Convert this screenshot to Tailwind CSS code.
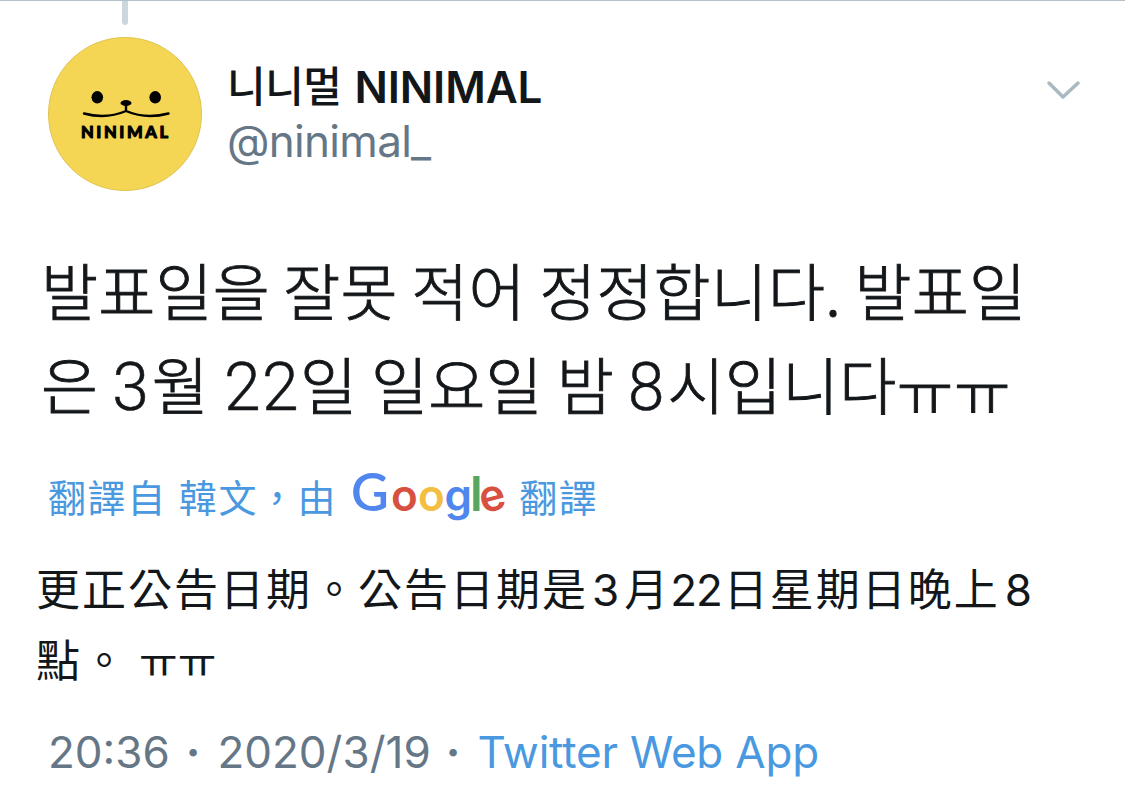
<!DOCTYPE html>
<html lang="zh-Hant">
  <head>
    <meta charset="UTF-8" />
    <meta name="viewport" content="width=device-width, initial-scale=1.0" />
    <title>니니멀 NINIMAL</title>
    <script src="https://cdn.jsdelivr.net/npm/@tailwindcss/browser@4"></script>
  </head>
  <body class="bg-white overflow-hidden font-['Inter','Noto_Sans_CJK_TC',sans-serif] text-[#14171a]">
    <article class="w-[1125px] h-[802px] border-t border-[#b4c0ca] whitespace-nowrap">
      <!-- thread line -->
      <div class="ml-[122px] w-1.5 h-6 rounded-b-full bg-[#ccd6dd]"></div>

      <header class="flex items-start h-[222px] pl-12 pt-3">
        <svg class="w-[154px] h-[154px] shrink-0" viewBox="0 0 154 154">
          <circle cx="77" cy="77" r="76.5" fill="#f4d654" stroke="#dfc450" />
          <ellipse cx="49.3" cy="60.3" rx="5.8" ry="6.2" />
          <ellipse cx="107.2" cy="60.3" rx="5.8" ry="6.2" />
          <ellipse cx="78" cy="66" rx="5.5" ry="3" />
          <path d="M78 67V74M36 76.5Q58 82.5 78 74Q98 82.5 120.5 76.5" fill="none" stroke="#000" stroke-width="2.4" stroke-linecap="round" stroke-linejoin="round" />
          <text x="33" y="100.5" font-family="Lato" font-weight="900" font-size="16.5" textLength="87" stroke="#000" stroke-width="1" stroke-linejoin="round">NINIMAL</text>
        </svg>
        <div class="ml-[25px] pt-5">
          <div class="flex items-baseline h-[54px] leading-[60px] font-semibold">
            <span class="font-['Noto_Sans_CJK_KR'] font-medium text-[42px] leading-[56px] tracking-[-0.5px] -translate-y-px">니니멀</span>
            <span class="ml-[13px] text-[44px] tracking-[-0.1px]">NINIMAL</span>
          </div>
          <div class="text-[44px] leading-[60px] text-[#657786] tracking-[-0.7px]">@ninimal_</div>
        </div>
        <svg class="ml-auto mr-[44px] mt-[42px] w-[36px] h-[22px]" viewBox="0 0 36 22" fill="none" stroke="#aab8c2" stroke-width="3.5" stroke-linecap="round" stroke-linejoin="round">
          <path d="M4 4L18 18L33 4" />
        </svg>
      </header>

      <div class="pl-[41px] font-['Noto_Sans_CJK_KR',sans-serif] font-light text-[62px] tracking-[0.2px] [-webkit-text-stroke:0.9px_#14171a]">
        <div class="h-[94px] leading-[84px] [word-spacing:-0.5px]">발표일을 잘못 적어 정정합니다. 발표일</div>
        <div class="h-[94px] leading-[84px]">은 <span class="font-['Roboto'] text-[66px] leading-none tracking-[3px] [-webkit-text-stroke:0.5px_#14171a]">3</span>월 <span class="ml-px font-['Roboto'] text-[66px] leading-none tracking-[1.4px] [-webkit-text-stroke:0.5px_#14171a]">22</span>일 일요일 밤 <span class="font-['Roboto'] text-[66px] leading-none tracking-[3px] [-webkit-text-stroke:0.5px_#14171a]">8</span>시입니다<span class="inline-block leading-none translate-y-[7px]">ㅠㅠ</span></div>
      </div>

      <div class="flex items-baseline h-[90px] pl-12 pt-[31px] text-[38px] leading-[60px] tracking-[1.6px] text-[#4a99e0] font-['Noto_Sans_CJK_TC']">
        <span>翻譯自</span>
        <span class="ml-3">韓文，由</span>
        <svg class="ml-4 w-[156px] h-[38px] overflow-visible" viewBox="0 0 156 38" letter-spacing="0">
          <text x="-2" y="37" font-family="Lato" font-weight="600" font-size="52" fill="#5086ee">G</text>
          <g font-family="Inter" font-weight="600" font-size="44">
            <text x="38" y="37" fill="#d85040">o</text>
            <text x="65" y="37" fill="#f3be42">o</text>
            <text x="91.5" y="37" fill="#5086ee">g</text>
            <text x="117" y="37" font-size="48" fill="#58a55c">l</text>
            <text x="126.5" y="37" transform="rotate(-15 139 25)" fill="#d85040">e</text>
          </g>
        </svg>
        <span class="ml-2.5">翻譯</span>
      </div>

      <div class="pl-9 pt-[30px] text-[44px] leading-[70px]">
        <div class="flex items-baseline h-[69px]">
          <span class="tracking-[2px]">更正公告日期。公告日期是</span>
          <span class="ml-1">3</span>
          <span class="ml-[5px]">月</span>
          <span class="ml-0.5 tracking-[-1px]">22</span>
          <span class="ml-0.5 tracking-[2px]">日星期日晚上</span>
          <span class="ml-[5px]">8</span>
        </div>
        <div class="flex items-baseline h-[69px]">
          <span class="tracking-[2px]">點。</span>
          <span class="ml-[11px] font-['Noto_Sans_CJK_KR'] text-[42px] translate-y-px">ㅠㅠ</span>
        </div>
      </div>

      <footer class="flex items-baseline pl-12 pt-[19px] text-[44px] leading-[80px] text-[#657786]">
        <span>20:36</span>
        <span class="ml-4 font-bold">·</span>
        <span class="ml-[17px]">2020/3/19</span>
        <span class="ml-[15px] font-bold">·</span>
        <span class="ml-[17px] tracking-[-0.2px] text-[#4a99e0]">Twitter Web App</span>
      </footer>
    </article>
  </body>
</html>
